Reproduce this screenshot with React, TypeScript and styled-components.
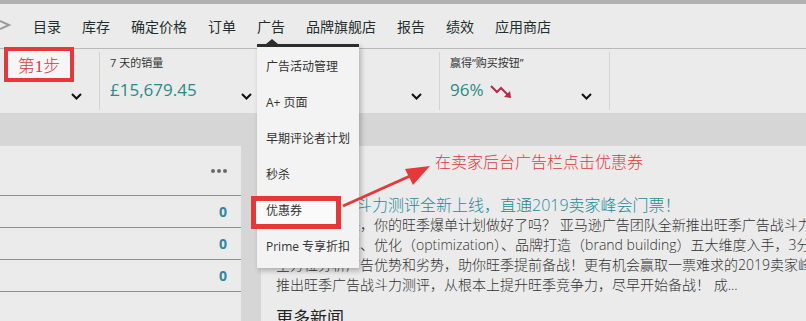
import styled, { createGlobalStyle } from 'styled-components';

const GlobalStyle = createGlobalStyle`
  html, body {
    margin: 0;
    padding: 0;
    background: #ebebeb;
    overflow: hidden;
  }
  body {
    font-family: "Open Sans", "Noto Sans CJK SC", sans-serif;
  }
`;

const Page = styled.div`
  position: relative;
  width: 806px;
  height: 321px;
  overflow: hidden;
  background: #ebebeb;
  display: flex;
  flex-direction: column;
`;

const TopStrip = styled.div`
  height: 4px;
  background: #b1b1b1;
  flex: none;
`;

const Nav = styled.nav`
  flex: none;
  height: 44px;
  display: flex;
  align-items: center;
  gap: 21px;
  border-bottom: 1px solid #b9b9b9;
`;

const NavItem = styled.span`
  font-size: 14px;
  color: #1f2e2e;
  white-space: nowrap;
`;

const Metrics = styled.div`
  flex: none;
  height: 64px;
  display: flex;
  margin-left: -70px;
`;

const Cell = styled.div`
  position: relative;
  width: 170px;
  flex: none;
  box-sizing: border-box;
  padding: 7px 18px 0 10px;
  display: flex;
  flex-direction: column;

  &::after {
    content: '';
    position: absolute;
    right: 0;
    top: 3px;
    bottom: 3px;
    width: 1px;
    background: #d3d3d3;
  }
`;

const Label = styled.div`
  font-size: 11px;
  line-height: 14px;
  color: #333;
  white-space: nowrap;
`;

const ValueRow = styled.div`
  margin-top: 8px;
  height: 24px;
  display: flex;
  align-items: flex-end;
`;

const Value = styled.span`
  font-size: 17px;
  line-height: 24px;
  color: #2c8a86;
  white-space: nowrap;
`;

const Chevron = styled.svg`
  margin-left: auto;
  margin-bottom: 2px;
  flex: none;
`;

const Content = styled.div`
  flex: 1;
  background: #d6d6d6;
  padding-top: 33px;
  display: flex;
  gap: 20px;
`;

const LeftPanel = styled.div`
  width: 241px;
  flex: none;
  background: #ebebeb;
`;

const PanelHead = styled.div`
  height: 49px;
  display: flex;
  align-items: center;
  justify-content: flex-end;
  gap: 2px;
  padding-right: 14px;
`;

const Dot = styled.span`
  width: 4px;
  height: 4px;
  border-radius: 50%;
  background: #6a6a6a;
`;

const CountRow = styled.div`
  height: 31px;
  border-top: 1px solid #8f8f8f;
  display: flex;
  align-items: center;
  justify-content: flex-end;
  padding-right: 14px;
  font-size: 14px;
  font-weight: 700;
  color: #2b88a2;
`;

const NewsPanel = styled.div`
  flex: 1;
  background: #ebebeb;
  padding: 49px 0 0 15px;
  overflow: hidden;
  white-space: nowrap;
`;

const Headline = styled.div`
  font-size: 16px;
  line-height: 20px;
  font-weight: 300;
  color: #1f8a9c;
`;

const BodyLine = styled.div`
  font-size: 14px;
  line-height: 20px;
  font-weight: 300;
  color: #333;
`;

const MoreTitle = styled.div`
  margin-top: 12px;
  font-size: 17px;
  line-height: 22px;
  color: #222;
`;

const Dropdown = styled.div`
  position: absolute;
  left: 257px;
  top: 44px;
  width: 102px;
  height: 224px;
  box-sizing: border-box;
  background: #f3f3f3;
  border-top: 3px solid #2d2d2d;
  box-shadow: 2px 3px 5px rgba(0, 0, 0, 0.25);
  padding-top: 2px;

  &::before {
    content: '';
    position: absolute;
    left: 9px;
    top: -8px;
    border-left: 6px solid transparent;
    border-right: 6px solid transparent;
    border-bottom: 5px solid #2d2d2d;
  }
`;

const MenuItem = styled.div<{ $marked?: boolean }>`
  position: relative;
  z-index: 0;
  height: 36px;
  line-height: 36px;
  padding-left: 9px;
  font-size: 12px;
  color: #333;
  white-space: nowrap;

  ${(p) =>
    p.$marked &&
    `
    &::before {
      content: '';
      position: absolute;
      z-index: -1;
      left: -6px;
      top: 3px;
      width: 90px;
      height: 33px;
      box-sizing: border-box;
      border: 5px solid #e5383b;
      background: #fafafa;
    }
  `}
`;

const StepBadge = styled.div`
  position: absolute;
  left: 4px;
  top: 47px;
  width: 70px;
  height: 35px;
  box-sizing: border-box;
  border: 4px solid #e5383b;
  background: #f6f6f6;
  display: flex;
  align-items: center;
  justify-content: center;
  font-family: "Liberation Serif", "Noto Sans CJK SC", serif;
  font-size: 17px;
  font-weight: 300;
  color: #d9363e;
`;

const Callout = styled.div`
  position: absolute;
  left: 435px;
  top: 151px;
  font-size: 16px;
  line-height: 22px;
  font-weight: 300;
  color: #e0393e;
  white-space: nowrap;
`;

const Overlay = styled.svg`
  position: absolute;
  left: 0;
  top: 0;
  pointer-events: none;
`;

const navItems = ['目录', '库存', '确定价格', '订单', '广告', '品牌旗舰店', '报告', '绩效', '应用商店'];
const menuItems = ['广告活动管理', 'A+ 页面', '早期评论者计划', '秒杀', '优惠券', 'Prime 专享折扣'];

function Down() {
  return (
    <Chevron width="11" height="7" viewBox="0 0 11 7">
      <polyline points="1,1 5.5,5.5 10,1" fill="none" stroke="#111" strokeWidth="2" />
    </Chevron>
  );
}

function TrendDown() {
  return (
    <svg width="24" height="16" viewBox="0 0 24 16" style={{ marginLeft: 6, marginBottom: 3 }}>
      <polyline points="1,3 7,9 11,5 18,12" fill="none" stroke="#b8284a" strokeWidth="2" />
      <polygon points="21,15 14,14 20,8" fill="#b8284a" />
    </svg>
  );
}

export default function App() {
  return (
    <Page>
      <GlobalStyle />
      <TopStrip />
      <Nav>
        <svg width="12" height="14" viewBox="0 0 12 14">
          <polyline points="0,2 9,6 0,10" fill="none" stroke="#9a9a9a" strokeWidth="2" />
        </svg>
        {navItems.map((n) => (
          <NavItem key={n}>{n}</NavItem>
        ))}
      </Nav>
      <Metrics>
        <Cell>
          <Label>&nbsp;</Label>
          <ValueRow>
            <Down />
          </ValueRow>
        </Cell>
        <Cell>
          <Label>7 天的销量</Label>
          <ValueRow>
            <Value>£15,679.45</Value>
            <Down />
          </ValueRow>
        </Cell>
        <Cell>
          <Label>广告销售额</Label>
          <ValueRow>
            <Value>£0.00</Value>
            <Down />
          </ValueRow>
        </Cell>
        <Cell>
          <Label>赢得“购买按钮”</Label>
          <ValueRow>
            <Value>96%</Value>
            <TrendDown />
            <Down />
          </ValueRow>
        </Cell>
      </Metrics>
      <Content>
        <LeftPanel>
          <PanelHead>
            <Dot />
            <Dot />
            <Dot />
          </PanelHead>
          <CountRow>0</CountRow>
          <CountRow>0</CountRow>
          <CountRow>0</CountRow>
          <CountRow />
        </LeftPanel>
        <NewsPanel>
          <Headline>旺季广告战斗力测评全新上线，直通2019卖家峰会门票！</Headline>
          <BodyLine>旺季即将到来，你的旺季爆单计划做好了吗？ 亚马逊广告团队全新推出旺季广告战斗力测评，从广告</BodyLine>
          <BodyLine>广告投放预算、优化（optimization）、品牌打造（brand building）五大维度入手，3分钟</BodyLine>
          <BodyLine>全方位分析广告优势和劣势，助你旺季提前备战！更有机会赢取一票难求的2019卖家峰会门票</BodyLine>
          <BodyLine>推出旺季广告战斗力测评，从根本上提升旺季竞争力，尽早开始备战！ 成...</BodyLine>
          <MoreTitle>更多新闻</MoreTitle>
        </NewsPanel>
      </Content>
      <Dropdown>
        {menuItems.map((m) => (
          <MenuItem key={m} $marked={m === '优惠券'}>
            {m}
          </MenuItem>
        ))}
      </Dropdown>
      <StepBadge>第1步</StepBadge>
      <Callout>在卖家后台广告栏点击优惠券</Callout>
      <Overlay width="806" height="321" viewBox="0 0 806 321">
        <line x1="343" y1="206" x2="410" y2="176" stroke="#e5383b" strokeWidth="3" />
        <polygon points="430,166 405,169 413,185" fill="#e5383b" />
      </Overlay>
    </Page>
  );
}
